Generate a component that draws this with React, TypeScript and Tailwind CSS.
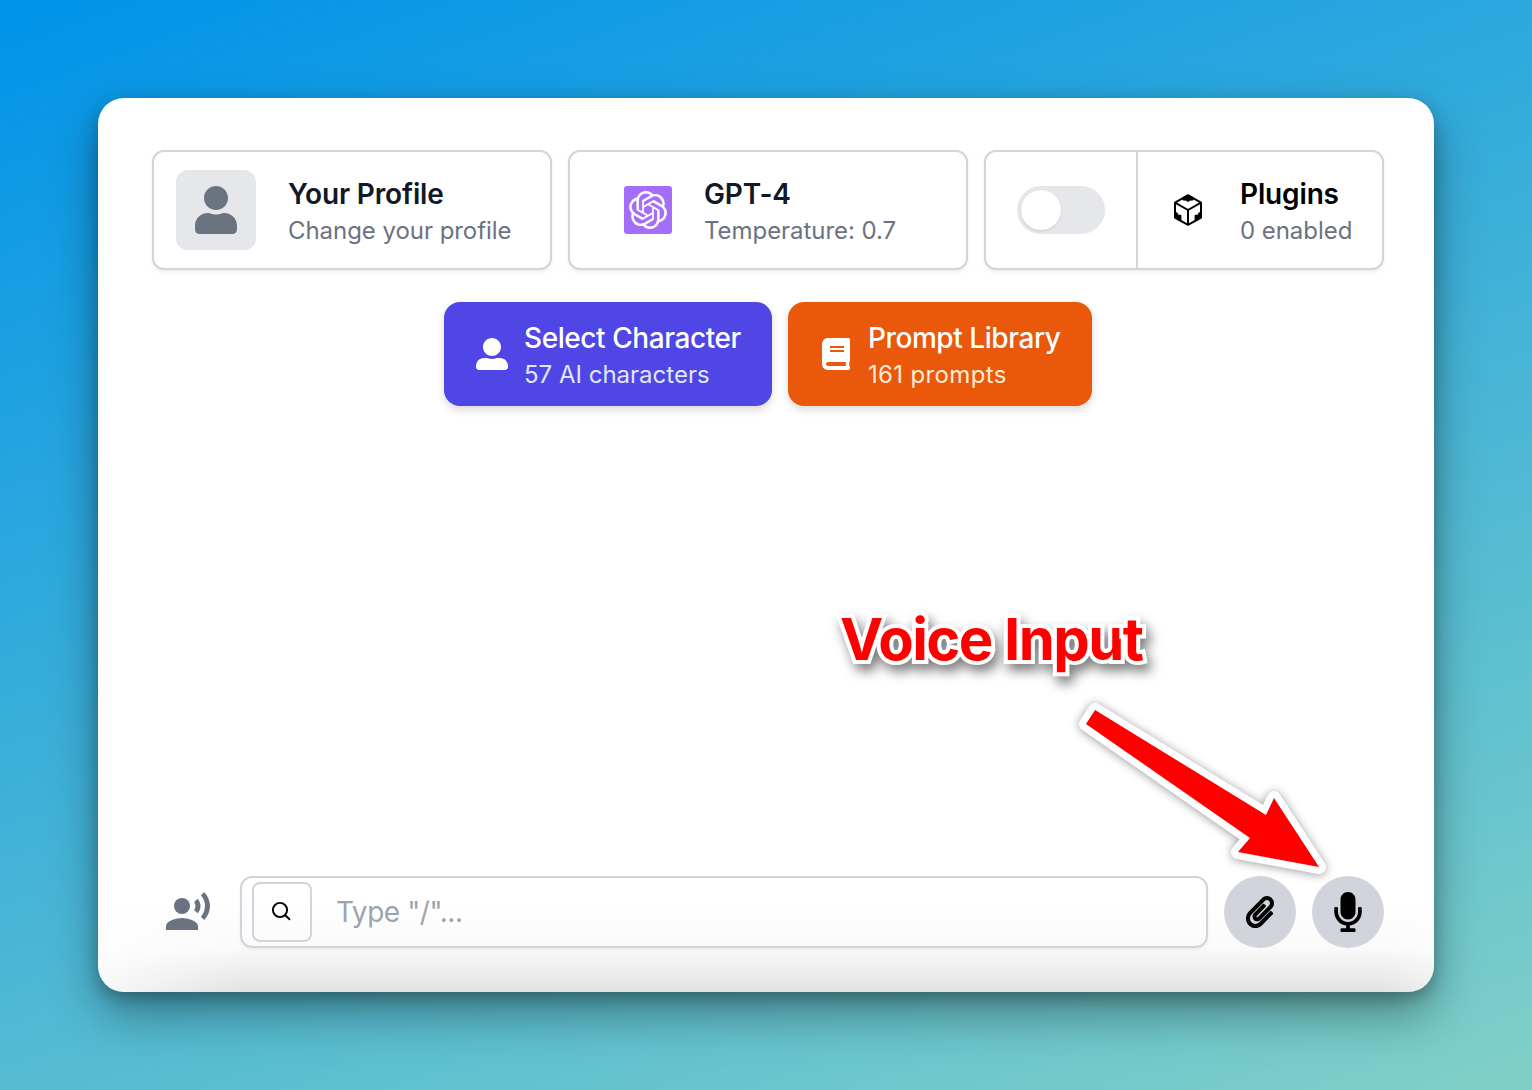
import React from 'react';
import { FaUser, FaUserAlt, FaBook, FaPaperclip, FaMicrophone } from 'react-icons/fa';
import { MdRecordVoiceOver } from 'react-icons/md';
import { SiOpenai } from 'react-icons/si';

function CubeIcon() {
  return (
    <svg viewBox="0 0 28 32" className="h-8 w-7" fill="none" stroke="#000" strokeWidth="2" strokeLinejoin="round">
      <path d="M14 1.2 27 8.6v15L14 30.8 1 23.6v-15z" />
      <path d="M1 8.6 14 16l13-7.4M14 16v15" />
      <path
        d="M7.5 4.8 14 1l6.5 3.8-2.2 2-2-.4L14 8l-2.3-1.6-2 .4zM0 17l3.6 1.8.4 1.8 3.4.4v7L1 24.4zM28 17l-3.6 1.8-.4 1.8-3.4.4v7L27 24.4z"
        fill="#000"
        stroke="none"
      />
    </svg>
  );
}

function SearchIcon() {
  return (
    <svg viewBox="0 0 20 20" className="mr-[2px] mb-[2px] size-5" fill="none" stroke="#000" strokeWidth="1.9">
      <circle cx="9" cy="9" r="7.1" />
      <path d="M14 14 19 18.8" />
    </svg>
  );
}

function Labels({ title, sub, titleClass, subClass }: { title: string; sub: string; titleClass: string; subClass: string }) {
  return (
    <div className="flex flex-col pt-px whitespace-nowrap">
      <span className={titleClass}>{title}</span>
      <span className={subClass}>{sub}</span>
    </div>
  );
}

const card = 'flex h-[120px] w-[400px] shrink-0 items-center rounded-xl border-2 border-[#d1d5db] shadow-[0_2px_4px_rgba(0,0,0,0.08)]';
const heading = 'text-[28px] leading-10 font-semibold tracking-[-0.15px]';
const muted = 'text-2xl leading-[33px] tracking-[-0.05px] text-[#6b7280]';
const actionTitle = 'text-[28px] leading-10 font-medium tracking-[-0.43px] text-white';

export default function App() {
  return (
    <div className="flex h-[1090px] w-[1532px] items-start bg-[linear-gradient(160deg,#0093E9_0%,#80D0C7_100%)] p-[98px] font-[Inter,sans-serif]">
      <main className="relative flex h-[894px] w-[1336px] flex-col rounded-[26px] bg-[linear-gradient(90deg,rgba(255,255,255,0.75)_0%,rgba(255,255,255,0)_11%,rgba(255,255,255,0)_96%,rgba(255,255,255,0.4)_100%),linear-gradient(to_bottom,#fff_90%,#fafafa_95%,#e2e2e2_100%)] pt-[52px] pr-[50px] pb-11 pl-[54px] shadow-[0_22px_48px_rgba(0,0,0,0.36),0_6px_16px_rgba(0,0,0,0.24)]">
        <div className="flex gap-4">
          <button className={card + ' gap-8 pl-[22px] text-left'}>
            <span className="flex size-20 items-center justify-center rounded-xl bg-[#e5e7eb]">
              <FaUser className="size-12 text-[#6b7280]" />
            </span>
            <Labels title="Your Profile" sub="Change your profile" titleClass={heading + ' text-[#111827]'} subClass={muted} />
          </button>
          <button className={card + ' gap-8 pl-[54px] text-left'}>
            <span className="flex size-12 items-center justify-center rounded-[3px] bg-[#a46efb]">
              <SiOpenai className="size-[38px] text-white" />
            </span>
            <Labels title="GPT-4" sub="Temperature: 0.7" titleClass={heading + ' text-[#111827]'} subClass={muted} />
          </button>
          <div className={card}>
            <div className="flex h-full w-[152px] shrink-0 items-center justify-center border-r-2 border-[#d1d5db]">
              <div className="flex h-12 w-[88px] items-center rounded-full bg-[#e5e7eb] pl-1">
                <span className="size-10 rounded-full bg-white shadow-sm" />
              </div>
            </div>
            <div className="flex items-center gap-[38px] pl-9">
              <CubeIcon />
              <Labels title="Plugins" sub="0 enabled" titleClass={heading + ' text-black'} subClass={muted} />
            </div>
          </div>
        </div>

        <div className="mt-8 flex justify-center gap-4">
          <button className="flex h-[104px] w-[328px] items-center gap-4 rounded-2xl bg-[#4f46e5] pl-8 text-left shadow-[0_4px_8px_rgba(0,0,0,0.15)]">
            <FaUserAlt className="size-8 text-white" />
            <Labels title="Select Character" sub="57 AI characters" titleClass={actionTitle} subClass="text-2xl leading-[33px] text-[#e0e7ff]" />
          </button>
          <button className="flex h-[104px] w-[304px] items-center gap-4 rounded-2xl bg-[#ea580c] pl-8 text-left shadow-[0_4px_8px_rgba(0,0,0,0.15)]">
            <FaBook className="size-8 text-white" />
            <Labels title="Prompt Library" sub="161 prompts" titleClass={actionTitle} subClass="text-2xl leading-[33px] tracking-[0.35px] text-[#ffedd5]" />
          </button>
        </div>

        <div className="mt-auto flex items-center">
          <MdRecordVoiceOver className="ml-3 size-12 shrink-0 text-[#6b7280]" />
          <div className="ml-7 flex h-[72px] w-[968px] shrink-0 items-center rounded-xl border-2 border-[#d1d5db] pl-[10px] shadow-[0_2px_3px_rgba(0,0,0,0.05)]">
            <span className="flex size-[60px] items-center justify-center rounded-lg border-2 border-[#d1d5db]">
              <SearchIcon />
            </span>
            <span className="ml-6 text-[28px] tracking-[-0.45px] text-[#9ca3af]">Type "/"...</span>
          </div>
          <button className="ml-4 flex size-[72px] shrink-0 items-center justify-center rounded-full bg-[#d1d5db]">
            <FaPaperclip className="size-8 text-black" />
          </button>
          <button className="ml-4 flex size-[72px] shrink-0 items-center justify-center rounded-full bg-[#d1d5db]">
            <FaMicrophone className="size-10 text-black" />
          </button>
        </div>

        <svg className="absolute top-[482px] left-[702px] overflow-visible" width="600" height="320" viewBox="800 580 600 320">
          <g className="[filter:drop-shadow(4px_7px_6px_rgba(0,0,0,0.5))]">
            <text x="840" y="660" textLength="304" className="fill-[#f00] stroke-white text-[58px] font-bold [paint-order:stroke]" strokeWidth="8" strokeLinejoin="miter">Voice Input</text>
          </g>
          <path
            className="[filter:drop-shadow(0px_1px_5px_rgba(0,0,0,0.4))]"
            d="M1095 710 1266 815 1274 798 1319 867 1238 852 1250 838 1086 724Z"
            fill="#f00" stroke="#fff" strokeWidth="14" strokeLinejoin="round" paintOrder="stroke"
          />
        </svg>
      </main>
    </div>
  );
}
